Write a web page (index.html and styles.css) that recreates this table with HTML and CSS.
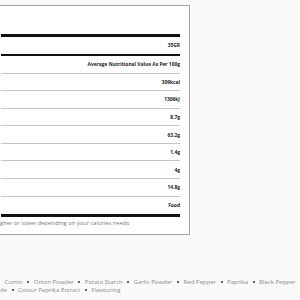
FILE: index.html
```html
<!DOCTYPE html>
<html>
<head>
<meta charset="utf-8">
<link rel="stylesheet" href="styles.css">
</head>
<body>
<div class="panel">
  <div class="table">
    <div class="row row-serving">35GR</div>
    <div class="row row-head">Average Nutritional Value As Per 100g</div>
    <div class="row">309kcal</div>
    <div class="row">1306kJ</div>
    <div class="row">8.7g</div>
    <div class="row">63.2g</div>
    <div class="row">1.4g</div>
    <div class="row">4g</div>
    <div class="row">14.8g</div>
    <div class="row row-last">Food</div>
  </div>
  <p class="note">gher or lower depending on your calories needs</p>
</div>
<div class="ingredients">
  <p class="ing-line ing-first"><span class="dot"></span>Cumin<span class="dot"></span>Onion Powder<span class="dot"></span>Potato Starch<span class="dot"></span>Garlic Powder<span class="dot"></span>Red Pepper<span class="dot"></span>Paprika<span class="dot"></span>Black Pepper<span class="dot"></span></p>
  <p class="ing-line">de<span class="dot"></span>Colour Paprika Extract<span class="dot"></span>Flavouring</p>
</div>
</body>
</html>
```
FILE: styles.css
```css
html, body {
  margin: 0;
  padding: 0;
  background: #fafafa;
  font-family: "Open Sans", "Liberation Sans", sans-serif;
  overflow: hidden;
}
.panel {
  box-sizing: border-box;
  width: 200px;
  height: 230px;
  margin: 5px 0 0 -10px;
  padding: 28px 9px 0 10px;
  border: 1px solid #a0a0a0;
  background: #fff;
}
.table {
  border-top: 3px solid #111;
}
.row {
  box-sizing: border-box;
  height: 17.6px;
  display: flex;
  align-items: center;
  justify-content: flex-end;
  font-size: 4.9px;
  font-weight: 700;
  color: #222;
  border-bottom: 1px solid #c4c4c4;
}
.row-serving {
  height: 18.5px;
  border-bottom: 2px solid #111;
}
.row-head {
  height: 18px;
}
.row-last {
  border-bottom: 3px solid #111;
  height: 20px;
}
.note {
  margin: 2px 0 0 -1px;
  font-size: 5.8px;
  color: #777;
  white-space: nowrap;
}
.ingredients {
  margin-top: 43px;
}
.ing-line {
  margin: 0;
  font-size: 6px;
  line-height: 8px;
  color: #8a8a8a;
  white-space: nowrap;
}
.ing-first {
  margin-left: -6.5px;
}
.dot {
  display: inline-block;
  width: 2px;
  height: 2px;
  border-radius: 50%;
  background: #333;
  margin: 0 4.5px;
  vertical-align: middle;
}
```
